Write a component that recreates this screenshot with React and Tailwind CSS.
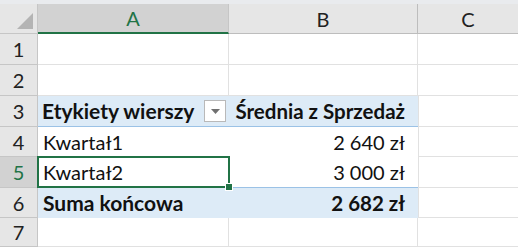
export default function App() {
  const font = { fontFamily: 'Lato, "Open Sans", sans-serif' };
  const rowH = [31, 31, 31, 30, 31, 30, 29];
  const rowNum = (n, h, sel) => (
    <div
      key={'rn' + n}
      className={`flex items-center justify-center border-r border-b border-[#c6c6c6] text-[20px] leading-none ${sel ? 'bg-[#d2d2d2] text-[#217346]' : 'bg-[#e6e6e6] text-[#222]'}`}
      style={{ height: h }}
    >
      {n}
    </div>
  );
  return (
    <div className="w-[518px] h-[247px] overflow-hidden bg-white" style={font}>
      <div className="h-[4px] bg-[#e9ebee]" />
      <div className="grid grid-cols-[38px_191px_189px_100px]">
        {/* header row */}
        <div className="relative h-[30px] bg-[#e6e6e6] border-r border-b border-[#c6c6c6]">
          <svg className="absolute right-[4px] bottom-[4px]" width="16" height="16" viewBox="0 0 16 16">
            <polygon points="16,0 16,16 0,16" fill="#b4b4b4" />
          </svg>
        </div>
        <div className="h-[30px] flex items-center justify-center bg-[#d2d2d2] text-[#217346] text-[20px] border-r border-[#c6c6c6] border-b-2 border-b-[#217346]">A</div>
        <div className="h-[30px] flex items-center justify-center bg-[#e6e6e6] text-[#222] text-[20px] border-r border-b border-[#bdbdbd]">B</div>
        <div className="h-[30px] flex items-center justify-center bg-[#e6e6e6] text-[#222] text-[20px] border-b border-[#bdbdbd]">C</div>

        {/* row 1 */}
        {rowNum(1, rowH[0])}
        <div className="border-r border-b border-[#e1e1e1]" />
        <div className="border-r border-b border-[#e1e1e1]" />
        <div className="border-b border-[#e1e1e1]" />

        {/* row 2 */}
        {rowNum(2, rowH[1])}
        <div className="border-r border-b border-[#e1e1e1]" />
        <div className="border-r border-b border-[#e1e1e1]" />
        <div className="border-b border-[#e1e1e1]" />

        {/* row 3 */}
        {rowNum(3, rowH[2])}
        <div className="relative flex items-end pl-[4px] pb-[2px] bg-[#ddebf7] border-b border-[#9bc2e6] font-bold text-[21px] leading-[26px] text-[#111] whitespace-nowrap">
          <span>Etykiety wierszy</span>
          <div className="absolute right-[3px] top-[4px] w-[22px] h-[22px] bg-white border border-[#b9b9b9] flex items-center justify-center">
            <svg width="9" height="5" viewBox="0 0 9 5"><polygon points="0,0 9,0 4.5,5" fill="#707070" /></svg>
          </div>
        </div>
        <div className="flex items-end justify-end pr-[13px] pb-[2px] bg-[#ddebf7] border-b border-[#9bc2e6] font-bold text-[20.5px] leading-[26px] text-[#111] whitespace-nowrap">
          <span>Średnia z Sprzedaż</span>
        </div>
        <div className="border-b border-l border-[#e1e1e1]" />

        {/* row 4 */}
        {rowNum(4, rowH[3])}
        <div className="flex items-end pl-[5px] pb-[2px] text-[20px] leading-[26px] text-[#111]">Kwartał1</div>
        <div className="flex items-end justify-end pr-[13px] pb-[2px] text-[20px] leading-[26px] text-[#111]">2 640 zł</div>
        <div className="border-b border-l border-[#e1e1e1]" />

        {/* row 5 */}
        {rowNum(5, rowH[4], true)}
        <div className="relative flex items-end pl-[5px] pb-[2px] text-[20px] leading-[26px] text-[#111] border-b border-[#9bc2e6]">
          <div className="absolute left-[-1px] top-[-1px] right-[-1px] bottom-[-1px] border-2 border-[#217346]" />
          <div className="absolute right-[-4px] bottom-[-4px] w-[8px] h-[8px] bg-[#217346] border border-white" />
          <span>Kwartał2</span>
        </div>
        <div className="flex items-end justify-end pr-[13px] pb-[2px] text-[20px] leading-[26px] text-[#111] border-b border-[#9bc2e6]">3 000 zł</div>
        <div className="border-b border-l border-[#e1e1e1]" />

        {/* row 6 */}
        {rowNum(6, rowH[5])}
        <div className="flex items-end pl-[5px] pb-[2px] bg-[#ddebf7] font-bold text-[21px] leading-[26px] text-[#111] whitespace-nowrap">Suma końcowa</div>
        <div className="flex items-end justify-end pr-[13px] pb-[2px] bg-[#ddebf7] font-bold text-[20.5px] leading-[26px] text-[#111]">2 682 zł</div>
        <div className="border-b border-l border-[#e1e1e1]" />

        {/* row 7 */}
        {rowNum(7, rowH[6])}
        <div className="border-r border-b border-[#e1e1e1]" />
        <div className="border-r border-b border-[#e1e1e1]" />
        <div className="border-b border-[#e1e1e1]" />
      </div>
    </div>
  );
}
